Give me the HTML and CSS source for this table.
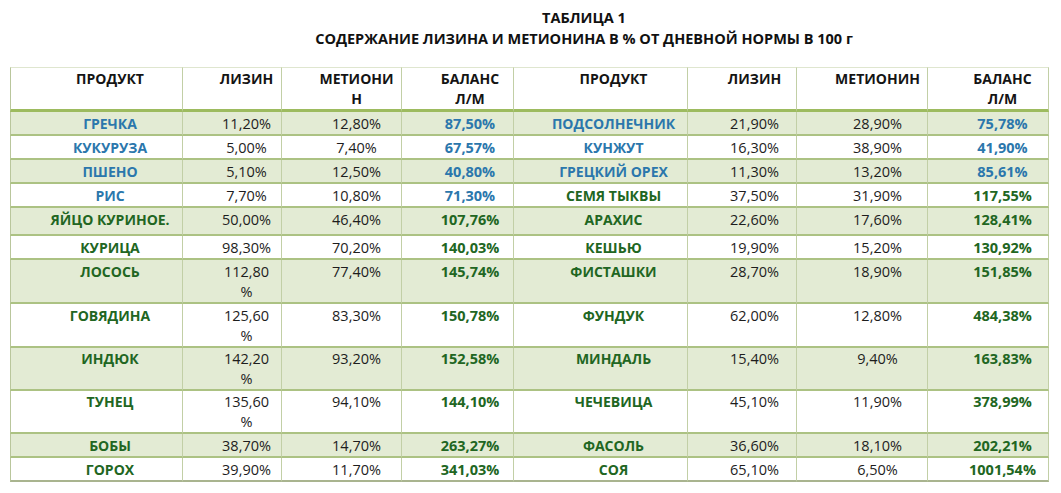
FILE: index.html
```html
<!DOCTYPE html>
<html lang="ru">
<head>
<meta charset="utf-8">
<title>Таблица 1</title>
<link rel="stylesheet" href="styles.css">
</head>
<body>
<div class="page">
  <div class="title">
    <div>ТАБЛИЦА 1</div>
    <div>СОДЕРЖАНИЕ ЛИЗИНА И МЕТИОНИНА В % ОТ ДНЕВНОЙ НОРМЫ В 100 г</div>
  </div>
  <table class="sheet">
    <colgroup>
      <col class="c1"><col class="c2"><col class="c3"><col class="c4">
      <col class="c5"><col class="c6"><col class="c7"><col class="c8">
    </colgroup>
    <tr class="head">
      <td class="p1">ПРОДУКТ</td><td class="p2">ЛИЗИН</td><td class="p3">МЕТИОНИ<br>Н</td><td class="p4">БАЛАНС<br>Л/М</td>
      <td class="p5">ПРОДУКТ</td><td class="p6">ЛИЗИН</td><td class="p7">МЕТИОНИН</td><td class="p8">БАЛАНС<br>Л/М</td>
    </tr>
    <tr class="r24 fill">
      <td class="p1 name blue">ГРЕЧКА</td><td class="p2">11,20%</td><td class="p3">12,80%</td><td class="p4 bal blue">87,50%</td>
      <td class="p5 name blue">ПОДСОЛНЕЧНИК</td><td class="p6">21,90%</td><td class="p7">28,90%</td><td class="p8 bal blue">75,78%</td>
    </tr>
    <tr class="r24">
      <td class="p1 name blue">КУКУРУЗА</td><td class="p2">5,00%</td><td class="p3">7,40%</td><td class="p4 bal blue">67,57%</td>
      <td class="p5 name blue">КУНЖУТ</td><td class="p6">16,30%</td><td class="p7">38,90%</td><td class="p8 bal blue">41,90%</td>
    </tr>
    <tr class="r24 fill">
      <td class="p1 name blue">ПШЕНО</td><td class="p2">5,10%</td><td class="p3">12,50%</td><td class="p4 bal blue">40,80%</td>
      <td class="p5 name blue">ГРЕЦКИЙ ОРЕХ</td><td class="p6">11,30%</td><td class="p7">13,20%</td><td class="p8 bal blue">85,61%</td>
    </tr>
    <tr class="r24">
      <td class="p1 name blue">РИС</td><td class="p2">7,70%</td><td class="p3">10,80%</td><td class="p4 bal blue">71,30%</td>
      <td class="p5 name green">СЕМЯ ТЫКВЫ</td><td class="p6">37,50%</td><td class="p7">31,90%</td><td class="p8 bal green">117,55%</td>
    </tr>
    <tr class="r28 fill">
      <td class="p1 name green">ЯЙЦО КУРИНОЕ.</td><td class="p2">50,00%</td><td class="p3">46,40%</td><td class="p4 bal green">107,76%</td>
      <td class="p5 name green">АРАХИС</td><td class="p6">22,60%</td><td class="p7">17,60%</td><td class="p8 bal green">128,41%</td>
    </tr>
    <tr class="r24">
      <td class="p1 name green">КУРИЦА</td><td class="p2">98,30%</td><td class="p3">70,20%</td><td class="p4 bal green">140,03%</td>
      <td class="p5 name green">КЕШЬЮ</td><td class="p6">19,90%</td><td class="p7">15,20%</td><td class="p8 bal green">130,92%</td>
    </tr>
    <tr class="r44 fill">
      <td class="p1 name green">ЛОСОСЬ</td><td class="p2">112,80<br>%</td><td class="p3">77,40%</td><td class="p4 bal green">145,74%</td>
      <td class="p5 name green">ФИСТАШКИ</td><td class="p6">28,70%</td><td class="p7">18,90%</td><td class="p8 bal green">151,85%</td>
    </tr>
    <tr class="r44">
      <td class="p1 name green">ГОВЯДИНА</td><td class="p2">125,60<br>%</td><td class="p3">83,30%</td><td class="p4 bal green">150,78%</td>
      <td class="p5 name green">ФУНДУК</td><td class="p6">62,00%</td><td class="p7">12,80%</td><td class="p8 bal green">484,38%</td>
    </tr>
    <tr class="r43 fill">
      <td class="p1 name green">ИНДЮК</td><td class="p2">142,20<br>%</td><td class="p3">93,20%</td><td class="p4 bal green">152,58%</td>
      <td class="p5 name green">МИНДАЛЬ</td><td class="p6">15,40%</td><td class="p7">9,40%</td><td class="p8 bal green">163,83%</td>
    </tr>
    <tr class="r43">
      <td class="p1 name green">ТУНЕЦ</td><td class="p2">135,60<br>%</td><td class="p3">94,10%</td><td class="p4 bal green">144,10%</td>
      <td class="p5 name green">ЧЕЧЕВИЦА</td><td class="p6">45,10%</td><td class="p7">11,90%</td><td class="p8 bal green">378,99%</td>
    </tr>
    <tr class="r24 fill">
      <td class="p1 name green">БОБЫ</td><td class="p2">38,70%</td><td class="p3">14,70%</td><td class="p4 bal green">263,27%</td>
      <td class="p5 name green">ФАСОЛЬ</td><td class="p6">36,60%</td><td class="p7">18,10%</td><td class="p8 bal green">202,21%</td>
    </tr>
    <tr class="r24 last">
      <td class="p1 name green">ГОРОХ</td><td class="p2">39,90%</td><td class="p3">11,70%</td><td class="p4 bal green">341,03%</td>
      <td class="p5 name green">СОЯ</td><td class="p6">65,10%</td><td class="p7">6,50%</td><td class="p8 bal green">1001,54%</td>
    </tr>
  </table>
</div>
</body>
</html>
```

FILE: styles.css
```css
html, body {
  margin: 0;
  padding: 0;
  background: #ffffff;
}

body {
  font-family: "Open Sans", "Noto Sans", "DejaVu Sans", sans-serif;
  color: #1d1d1d;
}

.page {
  padding-top: 7px;
}

.title {
  padding-left: 107px;
  text-align: center;
  font-weight: 700;
  font-size: 14.5px;
  line-height: 21px;
  color: #111111;
}

.sheet {
  margin-top: 18px;
  margin-left: 10px;
  width: 1039px;
  table-layout: fixed;
  border-collapse: separate;
  border-spacing: 0;
  font-size: 14.5px;
}

.c1 { width: 173px; }
.c2 { width: 99px; }
.c3 { width: 120px; }
.c4 { width: 112px; }
.c5 { width: 174px; }
.c6 { width: 109px; }
.c7 { width: 131px; }
.c8 { width: 121px; }

.sheet td {
  padding: 2px 0 0 0;
  vertical-align: top;
  text-align: center;
  line-height: 20px;
  white-space: nowrap;
  border-right: 1px solid #c2cfa6;
  border-bottom: 2px solid #acc283;
  box-sizing: border-box;
}

.sheet td:first-child {
  border-left: 1px solid #b9c69c;
}

.sheet .p1 { padding-left: 27px; }
.sheet .p2 { padding-left: 29px; }
.sheet .p3 { padding-left: 30px; }
.sheet .p4 { padding-left: 25px; }
.sheet .p5 { padding-left: 26px; }
.sheet .p6 { padding-left: 25px; }
.sheet .p7 { padding-left: 31px; }
.sheet .p8 { padding-left: 29px; }

.head { height: 45px; }
.head td {
  padding-top: 1px;
  font-size: 14px;
  font-weight: 700;
  color: #141414;
  background: #ffffff;
  border-top: 1px solid #dfe6cf;
  border-bottom: 3px solid #9dbb5f;
}

.r24 { height: 24px; }
.r28 { height: 28px; }
.r44 { height: 44px; }
.r43 { height: 43px; }
.r43 td { padding-top: 1px; }

.fill td { background: #e3ebd4; }

.last td { border-bottom: 2px solid #a9b48f; }

.name {
  font-size: 14px;
  font-weight: 700;
}

.bal { font-weight: 700; }

.blue { color: #2b77ac; }
.green { color: #216622; }
```
